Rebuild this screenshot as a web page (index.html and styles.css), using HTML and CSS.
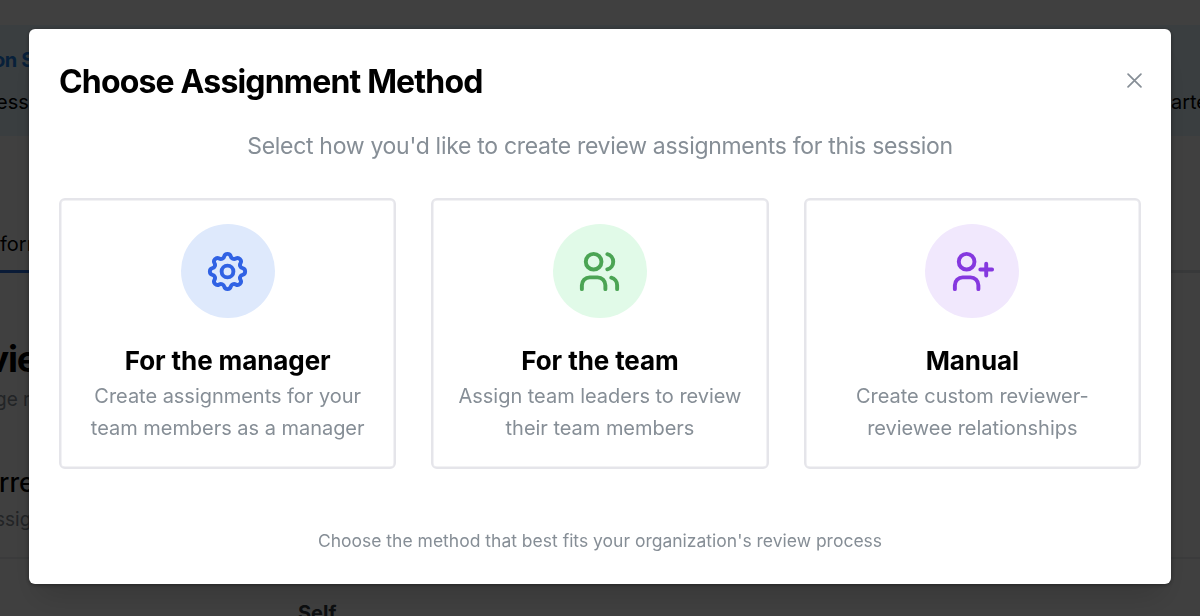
FILE: index.html
```html
<!DOCTYPE html>
<html lang="en">
<head>
    <meta charset="UTF-8">
    <meta name="viewport" content="width=device-width, initial-scale=1.0">
    <title>Choose Assignment Method</title>
    <link rel="stylesheet" href="styles.css">
</head>
<body>

    <!-- Page behind the dialog -->
    <div class="page">
        <div class="banner">
            <div class="banner-title">on S</div>
            <div class="banner-text"><span>essi</span><span>arte</span></div>
        </div>
        <div class="tabs">
            <div class="tab">forn</div>
        </div>
        <h1 class="page-title">vie</h1>
        <div class="page-text">ge r</div>
        <h2 class="section-title">rre</h2>
        <div class="section-text">ssig</div>
        <div class="table-head">Self</div>
    </div>

    <!-- Dialog -->
    <div class="overlay">
        <div class="modal" role="dialog" aria-labelledby="modal-title">
            <div class="modal-header">
                <h2 class="modal-title" id="modal-title">Choose Assignment Method</h2>
                <button class="close-btn" aria-label="Close">
                    <svg viewBox="0 0 14 14"><path d="M1 1l12 12M13 1L1 13"/></svg>
                </button>
            </div>

            <p class="intro">Select how you'd like to create review assignments for this session</p>

            <div class="options">
                <div class="option">
                    <div class="option-icon blue">
                        <svg viewBox="0 0 24 24">
                            <path d="M10.325 4.317c.426 -1.756 2.924 -1.756 3.35 0a1.724 1.724 0 0 0 2.573 1.066c1.543 -.94 3.31 .826 2.37 2.37a1.724 1.724 0 0 0 1.065 2.572c1.756 .426 1.756 2.924 0 3.35a1.724 1.724 0 0 0 -1.066 2.573c.94 1.543 -.826 3.31 -2.37 2.37a1.724 1.724 0 0 0 -2.572 1.065c-.426 1.756 -2.924 1.756 -3.35 0a1.724 1.724 0 0 0 -2.573 -1.066c-1.543 .94 -3.31 -.826 -2.37 -2.37a1.724 1.724 0 0 0 -1.065 -2.572c-1.756 -.426 -1.756 -2.924 0 -3.35a1.724 1.724 0 0 0 1.066 -2.573c-.94 -1.543 .826 -3.31 2.37 -2.37c1 .608 2.296 .07 2.572 -1.065z"/>
                            <circle cx="12" cy="12" r="3"/>
                        </svg>
                    </div>
                    <h3 class="option-title">For the manager</h3>
                    <p class="option-text">Create assignments for your<br>team members as a manager</p>
                </div>

                <div class="option">
                    <div class="option-icon green">
                        <svg viewBox="0 0 24 24">
                            <circle cx="9" cy="7" r="4"/>
                            <path d="M3 21v-2a4 4 0 0 1 4 -4h4a4 4 0 0 1 4 4v2"/>
                            <path d="M16 3.13a4 4 0 0 1 0 7.75"/>
                            <path d="M21 21v-2a4 4 0 0 0 -3 -3.85"/>
                        </svg>
                    </div>
                    <h3 class="option-title">For the team</h3>
                    <p class="option-text">Assign team leaders to review<br>their team members</p>
                </div>

                <div class="option">
                    <div class="option-icon purple">
                        <svg viewBox="0 0 24 24">
                            <circle cx="9" cy="7" r="4"/>
                            <path d="M3 21v-2a4 4 0 0 1 4 -4h4a4 4 0 0 1 4 4v2"/>
                            <path d="M16 11h6m-3 -3v6"/>
                        </svg>
                    </div>
                    <h3 class="option-title">Manual</h3>
                    <p class="option-text">Create custom reviewer-<br>reviewee relationships</p>
                </div>
            </div>

            <p class="hint">Choose the method that best fits your organization's review process</p>
        </div>
    </div>

</body>
</html>
```
FILE: styles.css
```css
* {
    box-sizing: border-box;
}

body {
    margin: 0;
    height: 616px;
    overflow: hidden;
    font-family: Inter, "Liberation Sans", sans-serif;
    color: #000;
    background-color: #fff;
}

h1, h2, h3, p {
    margin: 0;
}

/* Page behind the dialog */
.page {
    height: 616px;
    padding-top: 25px;
    overflow: hidden;
}

.banner {
    height: 111px;
    padding-top: 19px;
    background-color: #e7f5ff;
}

.banner-title {
    margin-left: -7px;
    font-size: 20px;
    line-height: 32px;
    font-weight: 700;
    letter-spacing: -0.4px;
    color: #2280e6;
}

.banner-text {
    display: flex;
    justify-content: space-between;
    margin: 10px -8px 0 -4px;
    font-size: 20px;
    line-height: 32px;
}

.tabs {
    height: 137px;
    padding-top: 92px;
    border-bottom: 3px solid #dee2e6;
}

.tab {
    width: 120px;
    height: 45px;
    font-size: 20px;
    line-height: 32px;
    border-bottom: 3px solid #2b6cd9;
}

.page-title {
    margin: 63px 0 0 -13px;
    font-size: 37px;
    line-height: 46px;
    font-weight: 700;
    letter-spacing: -1.2px;
}

.page-text,
.section-text {
    margin-left: -5px;
    font-size: 19px;
    line-height: 32px;
    color: #868e96;
}

.page-text {
    margin-top: 2px;
}

.section-title {
    margin: 49px 0 0 -1px;
    font-size: 26px;
    line-height: 36px;
    font-weight: 500;
}

.section-text {
    height: 55px;
    margin-top: 3px;
    border-bottom: 2px solid #e9ecef;
}

.table-head {
    padding: 38px 0 0 298px;
    font-size: 20px;
    line-height: 32px;
    font-weight: 700;
    color: #343a40;
}

/* Dialog */
.overlay {
    position: fixed;
    inset: 0;
    padding: 29px;
    background-color: rgba(0, 0, 0, 0.75);
}

.modal {
    height: 554.5px;
    padding: 30px;
    background-color: #fff;
    border-radius: 6px;
    box-shadow: 0 1px 4px rgba(0, 0, 0, 0.4), 0 20px 30px -8px rgba(0, 0, 0, 0.15);
}

.modal-header {
    display: flex;
    justify-content: space-between;
    align-items: center;
    height: 44px;
}

.modal-title {
    font-size: 32px;
    font-weight: 700;
    letter-spacing: -0.83px;
}

.close-btn {
    display: flex;
    align-items: center;
    justify-content: center;
    width: 15px;
    height: 15px;
    margin: -1px -1px 0 0;
    padding: 0;
    border: none;
    background: none;
}

.close-btn svg {
    width: 15px;
    height: 15px;
    fill: none;
    stroke: #868e96;
    stroke-width: 1.6;
    stroke-linecap: round;
}

.intro {
    margin-top: 24px;
    font-size: 23px;
    line-height: 38px;
    letter-spacing: -0.3px;
    text-align: center;
    color: #868e96;
}

.options {
    display: grid;
    grid-template-columns: repeat(3, 1fr);
    gap: 35px;
    margin-top: 33px;
}

.option {
    height: 271px;
    padding-top: 24px;
    border: 2px solid #e5e5ea;
    border-radius: 6px;
    box-shadow: inset 0 0 0 0.5px #e5e5ea;
    text-align: center;
}

.option-icon {
    display: flex;
    align-items: center;
    justify-content: center;
    width: 94px;
    height: 94px;
    margin: 0 auto;
    border-radius: 50%;
}

.option-icon svg {
    width: 47px;
    height: 47px;
    fill: none;
    stroke: currentColor;
    stroke-width: 2;
    stroke-linecap: round;
    stroke-linejoin: round;
}

.blue {
    color: #3062e4;
    background-color: #dee9fc;
}

.green {
    color: #4ba454;
    background-color: #e1fae8;
}

.purple {
    color: #8538df;
    background-color: #f1e8fd;
}

.option-title {
    margin-top: 24px;
    font-size: 26px;
    line-height: 38px;
    font-weight: 700;
    letter-spacing: -0.1px;
}

.option-text {
    font-size: 20px;
    line-height: 32px;
    letter-spacing: -0.03px;
    color: #868e96;
}

.hint {
    margin-top: 56px;
    font-size: 17.5px;
    line-height: 31px;
    text-align: center;
    color: #868e96;
}
```
